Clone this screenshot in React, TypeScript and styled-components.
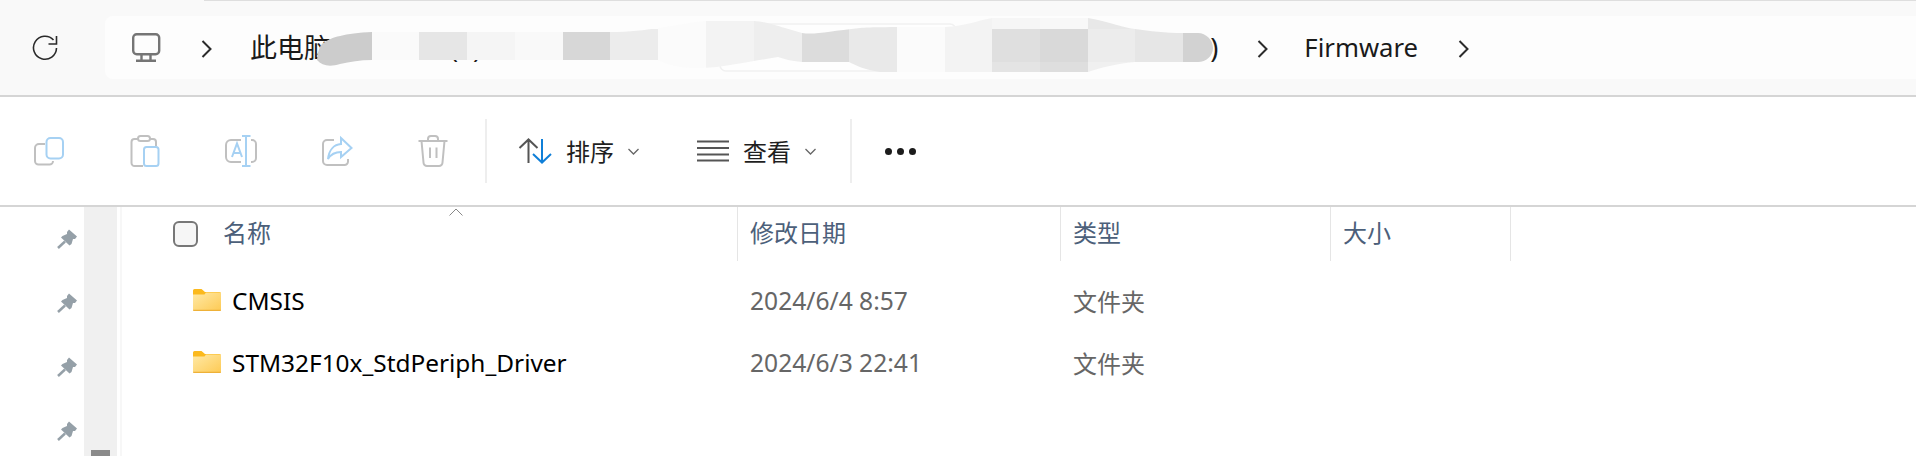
import React from 'react';
import styled, { createGlobalStyle } from 'styled-components';

const latin = `"Noto Sans", "Noto Sans CJK SC", sans-serif`;

const GlobalStyle = createGlobalStyle`
  html, body {
    margin: 0;
    padding: 0;
    background: #fff;
    overflow: hidden;
  }
`;

const Page = styled.div`
  width: 1916px;
  height: 456px;
  overflow: hidden;
  font-family: ${latin};
  background: #fff;
`;

// ---- address bar ----
const TopBar = styled.div`
  height: 97px;
  box-sizing: border-box;
  background: #f9f9f9;
  border-bottom: 2px solid #d5d5d5;
`;

const TopEdge = styled.div`
  height: 1px;
  margin-left: 204px;
  background: #dedede;
`;

const NavRow = styled.div`
  display: flex;
  margin-top: 15px;
  height: 63px;
`;

const RefreshSlot = styled.div`
  width: 105px;
  padding: 19px 0 0 32px;
  box-sizing: border-box;
`;

const AddressBar = styled.div`
  position: relative;
  flex: 1;
  display: flex;
  align-items: center;
  padding-left: 26px;
  background: #fdfdfd;
  border-radius: 8px 0 0 8px;
  font-size: 27px;
  color: #1a1a1a;
`;

const Crumb = styled.span<{ $left: number; $size?: number }>`
  margin-left: ${p => p.$left}px;
  font-size: ${p => p.$size ?? 27}px;
  white-space: nowrap;
  line-height: 63px;
`;

const Blur = styled.svg`
  position: absolute;
  left: 211px;
  top: 0;
`;

// ---- command bar ----
const CommandBar = styled.div`
  height: 110px;
  box-sizing: border-box;
  padding-left: 1px;
  display: flex;
  align-items: center;
  border-bottom: 2px solid #d5d5d5;
`;

const ToolButton = styled.div`
  width: 96px;
  display: flex;
  justify-content: center;
  align-items: center;
`;

const Divider = styled.div<{ $left: number }>`
  width: 2px;
  height: 64px;
  margin-left: ${p => p.$left}px;
  background: #eeeeee;
`;

const MenuButton = styled.div<{ $left: number }>`
  display: flex;
  align-items: center;
  margin-left: ${p => p.$left}px;
  font-size: 24px;
  color: #1f1f1f;
`;

const MenuLabel = styled.span`
  margin: 2px 14px 0 14px;
  line-height: 32px;
`;

const Dots = styled.div`
  display: flex;
  gap: 5px;
  margin-left: 33px;
`;

const Dot = styled.i`
  width: 7px;
  height: 7px;
  border-radius: 50%;
  background: #1c1c1c;
`;

// ---- body ----
const Body = styled.div`
  display: flex;
  height: 249px;
`;

const PinColumn = styled.div`
  width: 84px;
  box-sizing: border-box;
  padding: 22px 0 0 57px;
  display: flex;
  flex-direction: column;
  gap: 44px;
`;

const ScrollTrack = styled.div`
  width: 33px;
  display: flex;
  flex-direction: column;
  justify-content: flex-end;
  align-items: center;
  background: #f0f0f0;
`;

const ScrollThumb = styled.div`
  width: 19px;
  height: 6px;
  background: #8a8a8a;
`;

const ListPane = styled.div`
  flex: 1;
  margin-left: 3px;
  border-left: 2px solid #f7f7f7;
`;

const Columns = styled.div`
  display: grid;
  grid-template-columns: 616px 323px 270px 180px;
`;

const HeaderRow = styled(Columns)`
  height: 54px;
  position: relative;
`;

const HeaderCell = styled.div<{ $pad?: number }>`
  display: flex;
  align-items: center;
  padding-left: ${p => p.$pad ?? 12}px;
  border-right: 1px solid #e5e5e5;
  font-size: 24px;
  color: #4c607a;
`;

const HeaderLabel = styled.span`
  margin-bottom: 5px;
`;

const CheckBox = styled.div`
  width: 25px;
  height: 26px;
  box-sizing: border-box;
  margin-right: 25px;
  border: 2px solid #777;
  border-radius: 6px;
  background: #f6f6f6;
`;

const SortCaret = styled.svg`
  position: absolute;
  left: 327px;
  top: 1px;
`;

const Rows = styled.div`
  padding-top: 8px;
`;

const FileRow = styled(Columns)`
  height: 62px;
  font-size: 24.4px;
`;

const NameCell = styled.div`
  display: flex;
  align-items: center;
  gap: 11px;
  padding-left: 71px;
  color: #000;
  white-space: nowrap;
`;

const InfoCell = styled.div<{ $pad?: number; $size?: number }>`
  display: flex;
  align-items: center;
  padding-left: ${p => p.$pad ?? 12}px;
  font-size: ${p => p.$size ?? 24.6}px;
  color: #666;
  white-space: nowrap;
`;

// ---- icons ----
const GRAY = '#c0c0c0';
const BLUE = '#a6d1f3';

const Chevron = () => (
  <svg width="11" height="18" viewBox="0 0 11 18" fill="none" stroke="#2b2b2b" strokeWidth="2">
    <path d="M1.5 1 9.5 9 1.5 17" />
  </svg>
);

const Refresh = () => (
  <svg width="26" height="26" viewBox="0 0 26 26" fill="none" stroke="#2a2a2a" strokeWidth="1.6">
    <path d="M21.5 5A11.5 11.5 0 1 0 24.5 13" />
    <path d="M24.5 1V9H16.5" />
  </svg>
);

const Monitor = () => (
  <svg width="30" height="30" viewBox="0 0 30 30" fill="none" stroke="#757575" strokeWidth="2.4" style={{ display: 'block' }}>
    <rect x="2.2" y="1.2" width="26" height="20" rx="3.5" />
    <path d="M10.5 22V27M19.5 22V27M5 27.8H25" />
  </svg>
);

const CopyIcon = () => (
  <svg width="32" height="32" viewBox="0 0 32 32" fill="none" strokeWidth="2">
    <path stroke={GRAY} d="M12 9H6a4 4 0 0 0-4 4V26a3.5 3.5 0 0 0 3.5 3.5H16.500a3.500 3.500 0 0 0 3.500-3.500" />
    <rect stroke={BLUE} x="13.500" y="3" width="16.500" height="20.500" rx="4" />
  </svg>
);

const PasteIcon = () => (
  <svg width="32" height="32" viewBox="0 0 32 32" fill="none" strokeWidth="2">
    <path stroke={GRAY} d="M9 4H5.500a3 3 0 0 0-3 3V28a3 3 0 0 0 3 3H14M21 4h3a3 3 0 0 1 3 3v4" />
    <rect stroke={GRAY} x="9" y="1" width="12" height="5" rx="2.500" />
    <rect stroke={BLUE} x="15" y="12" width="14.500" height="19" rx="2.500" />
  </svg>
);

const RenameIcon = () => (
  <svg width="32" height="32" viewBox="0 0 32 32" fill="none" strokeWidth="2">
    <path stroke={GRAY} d="M16 5H6a5 5 0 0 0-5 5V22a5 5 0 0 0 5 5H16M26 5h1a4 4 0 0 1 4 4V23a4 4 0 0 1-4 4h-1" />
    <path stroke={BLUE} d="M21 1V31M17 1H25.500M17 31H25.500M7 22 12 8.500 17 22M8.500 18H15.500" />
  </svg>
);

const ShareIcon = () => (
  <svg width="32" height="32" viewBox="0 0 32 32" fill="none" strokeWidth="2">
    <path stroke={GRAY} d="M13 5H6a4 4 0 0 0-4 4V26a4 4 0 0 0 4 4H23.500a3.500 3.500 0 0 0 3.500-3.500V24" />
    <path stroke={BLUE} d="M20 3 30.500 13 20 22V17C14 17 10 19 7 24 8 15 13 9.500 20 9Z" />
  </svg>
);

const TrashIcon = () => (
  <svg width="32" height="32" viewBox="0 0 32 32" fill="none" stroke={GRAY} strokeWidth="2">
    <path d="M1.500 6H30.500M11 5.500V4a3 3 0 0 1 3-3H18a3 3 0 0 1 3 3V5.500" />
    <path d="M4.500 6 6.500 27.500a3.500 3.500 0 0 0 3.500 3.500H22a3.500 3.500 0 0 0 3.500-3.500L27.500 6" />
    <path d="M13 12.500V23M19.500 12.500V23" />
  </svg>
);

const SortIcon = () => (
  <svg width="34" height="26" viewBox="0 0 34 26" fill="none" strokeWidth="2">
    <path stroke="#555" d="M10.500 25V1.500M1.500 10 10.500 1.500 19.500 10" />
    <path stroke="#0f7fd8" d="M24 1V24.500M15 16 24 24.500 33 16" />
  </svg>
);

const ViewIcon = () => (
  <svg width="32" height="22" viewBox="0 0 32 22" fill="none" stroke="#555" strokeWidth="2">
    <path d="M0 1.500H32M0 8H32M0 14.500H32M0 20.500H32" />
  </svg>
);

const SmallChevron = () => (
  <svg width="11" height="7" viewBox="0 0 11 7" fill="none" stroke="#666" strokeWidth="1.300">
    <path d="M.5 1 5.500 6 10.500 1" />
  </svg>
);

const Pin = () => (
  <svg width="20" height="20" viewBox="0 0 20 20" style={{ display: 'block' }}>
    <path fill="#95a0a8" d="M12 .5 20 7.500 18 10H16L14.500 15 12.500 16.500 4 8.500 5.500 7 10 5V3Z" />
    <path stroke="#95a0a8" strokeWidth="2.500" d="M8 12.500 1 19" />
  </svg>
);

const Folder = ({ id }: { id: string }) => (
  <svg width="28" height="22" viewBox="0 0 28 22" style={{ display: 'block' }}>
    <defs>
      <linearGradient id={id} x1="0" y1="0" x2="1" y2="1">
        <stop offset="0" stopColor="#ffe9a6" />
        <stop offset="1" stopColor="#fdca54" />
      </linearGradient>
    </defs>
    <path fill="#fbb91d" d="M0 1.500A1.500 1.500 0 0 1 1.500 0H8.500L12 3H26.500A1.500 1.500 0 0 1 28 4.500V6H0Z" />
    <path fill={`url(#${id})`} d="M0 5.500H11.500L13 3.500H28V20.500A1.500 1.500 0 0 1 26.500 22H1.500A1.500 1.500 0 0 1 0 20.500Z" />
    <path fill="#eeb138" d="M0 20.700H28V21A1 1 0 0 1 27 22H1A1 1 0 0 1 0 21Z" />
  </svg>
);

// mosaic smear that hides the middle of the path, in page coordinates
const tiles = [
  [316, 29, 56, 43, '#cccccc'],
  [372, 29, 47, 43, '#fafafa'],
  [419, 29, 48, 43, '#e6e6e6'],
  [467, 29, 48, 43, '#f5f5f5'],
  [515, 29, 48, 43, '#f9f9f9'],
  [563, 29, 47, 43, '#d7d7d7'],
  [610, 29, 48, 43, '#ececec'],
  [658, 18, 48, 54, '#fbfbfb'],
  [706, 18, 48, 54, '#f3f3f3'],
  [754, 18, 48, 54, '#eeeeee'],
  [802, 18, 47, 54, '#dcdcdc'],
  [849, 18, 48, 54, '#e9e9e9'],
  [897, 18, 48, 54, '#fbfbfb'],
  [945, 18, 47, 54, '#f3f3f3'],
  [992, 29, 48, 33, '#dfdfdf'],
  [1040, 29, 48, 33, '#d9d9d9'],
  [1088, 29, 47, 33, '#ececec'],
  [1135, 29, 48, 33, '#e6e6e6'],
  [1183, 29, 30, 33, '#d2d2d2'],
  [992, 18, 48, 11, '#f6f6f6'],
  [1040, 18, 48, 11, '#f8f8f8'],
  [1088, 18, 47, 11, '#e8e8e8'],
  [1135, 18, 48, 11, '#ececec'],
  [992, 62, 48, 10, '#e4e4e4'],
  [1040, 62, 48, 10, '#dedede'],
  [1088, 62, 47, 10, '#f0f0f0'],
] as const;

const smearOutline =
  'M317 60C318 50 320 44 325 42C330 38 345 33 372 32H610C630 32 645 30 658 28C680 25 695 21 707 21H754C768 22 775 25 785 28L802 33C815 35 830 31 860 28C870 27 890 27 945 27C965 26 980 20 992 18H1088C1110 22 1125 28 1135 29C1150 31 1165 33 1183 33H1198C1206 33 1213 40 1213 48C1213 56 1206 62 1198 62H1135C1115 64 1100 68 1088 72H880C865 70 855 65 849 62H802C790 61 785 59 778 57C765 59 750 62 730 65C715 68 695 69 680 67C668 65 662 62 658 60H372C360 60 350 62 340 64C330 67 322 66 317 60Z';

const Smear = () => (
  <Blur width="900" height="63" viewBox="316 16 900 63">
    <defs>
      <clipPath id="smear">
        <path d={smearOutline} />
      </clipPath>
    </defs>
    <rect x="720" y="24" width="236" height="47" rx="6" fill="#fefefe" stroke="#f1f1f1" strokeWidth="1.500" />
    <g clipPath="url(#smear)">
      {tiles.map(([x, y, w, h, c]) => (
        <rect key={`${x}-${y}`} x={x} y={y} width={w} height={h} fill={c} />
      ))}
    </g>
  </Blur>
);

const files = [
  { name: 'CMSIS', date: '2024/6/4 8:57', kind: '文件夹' },
  { name: 'STM32F10x_StdPeriph_Driver', date: '2024/6/3 22:41', kind: '文件夹' },
];

export default function App() {
  return (
    <Page>
      <GlobalStyle />
      <TopBar>
        <TopEdge />
        <NavRow>
          <RefreshSlot><Refresh /></RefreshSlot>
          <AddressBar>
            <Monitor />
            <Crumb $left={40}><Chevron /></Crumb>
            <Crumb $left={38}>此电脑</Crumb>
            <Crumb $left={119}>(</Crumb>
            <Crumb $left={15}>)</Crumb>
            <Crumb $left={729}>)</Crumb>
            <Crumb $left={39}><Chevron /></Crumb>
            <Crumb $left={36} $size={25.7}>Firmware</Crumb>
            <Crumb $left={40}><Chevron /></Crumb>
            <Smear />
          </AddressBar>
        </NavRow>
      </TopBar>

      <CommandBar>
        <ToolButton><CopyIcon /></ToolButton>
        <ToolButton><PasteIcon /></ToolButton>
        <ToolButton><RenameIcon /></ToolButton>
        <ToolButton><ShareIcon /></ToolButton>
        <ToolButton><TrashIcon /></ToolButton>
        <Divider $left={4} />
        <MenuButton $left={31}>
          <SortIcon />
          <MenuLabel>排序</MenuLabel>
          <SmallChevron />
        </MenuButton>
        <MenuButton $left={58}>
          <ViewIcon />
          <MenuLabel>查看</MenuLabel>
          <SmallChevron />
        </MenuButton>
        <Divider $left={34} />
        <Dots><Dot /><Dot /><Dot /></Dots>
      </CommandBar>

      <Body>
        <PinColumn>
          <Pin /><Pin /><Pin /><Pin />
        </PinColumn>
        <ScrollTrack><ScrollThumb /></ScrollTrack>
        <ListPane>
          <HeaderRow>
            <HeaderCell $pad={51}><CheckBox /><HeaderLabel>名称</HeaderLabel></HeaderCell>
            <HeaderCell><HeaderLabel>修改日期</HeaderLabel></HeaderCell>
            <HeaderCell><HeaderLabel>类型</HeaderLabel></HeaderCell>
            <HeaderCell><HeaderLabel>大小</HeaderLabel></HeaderCell>
            <SortCaret width="14" height="8" viewBox="0 0 14 8" fill="none" stroke="#888" strokeWidth="1">
              <path d="M.5 7.500 7 1 13.500 7.500" />
            </SortCaret>
          </HeaderRow>
          <Rows>
            {files.map((f, i) => (
              <FileRow key={f.name}>
                <NameCell><Folder id={`folder-${i}`} />{f.name}</NameCell>
                <InfoCell>{f.date}</InfoCell>
                <InfoCell $size={24}>{f.kind}</InfoCell>
                <InfoCell />
              </FileRow>
            ))}
          </Rows>
        </ListPane>
      </Body>
    </Page>
  );
}
